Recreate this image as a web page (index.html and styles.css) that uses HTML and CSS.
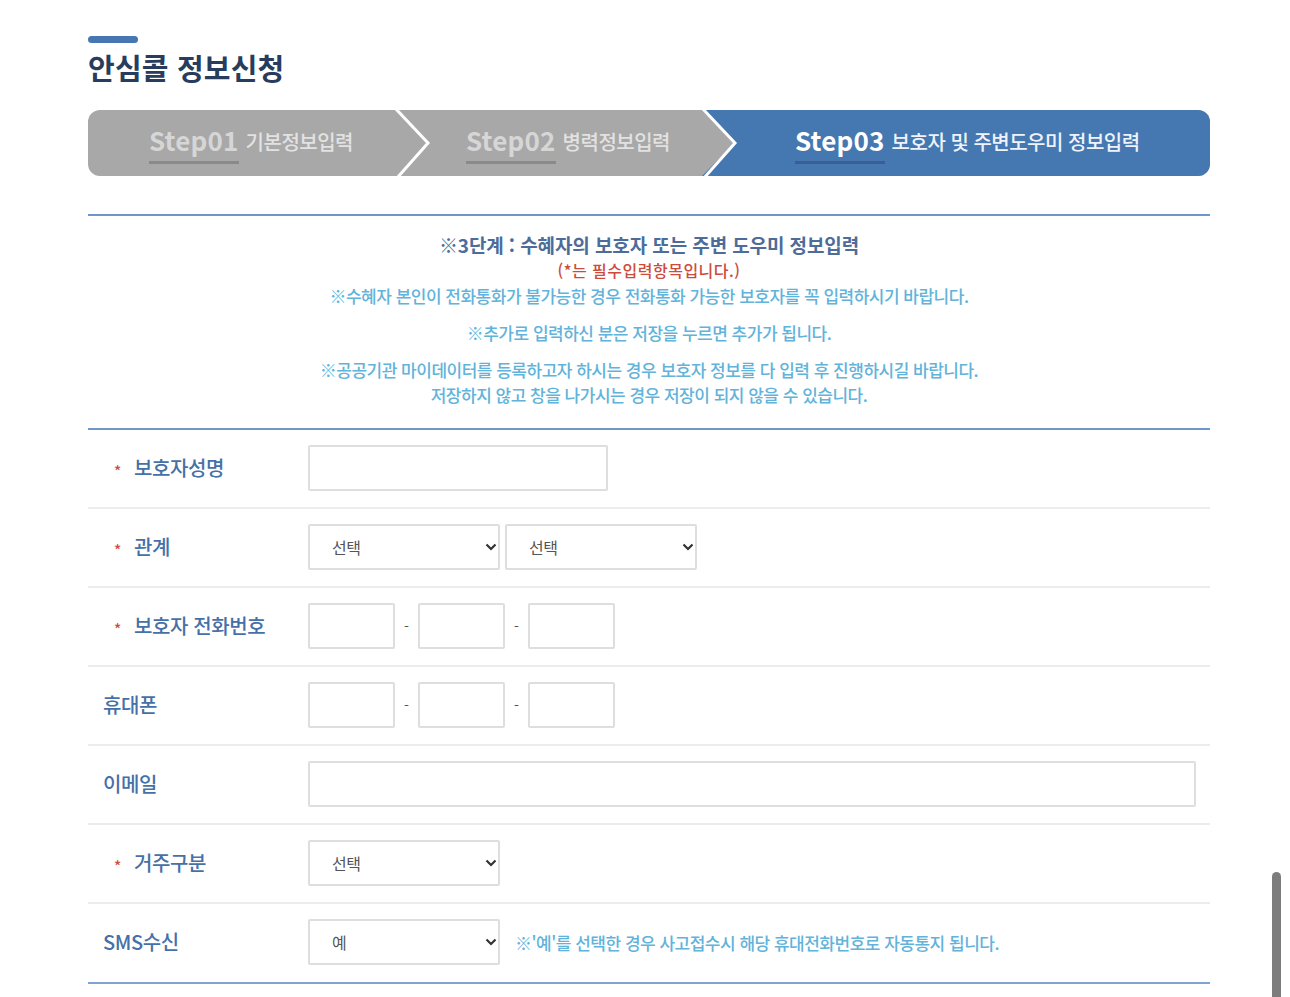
FILE: index.html
```html
<!DOCTYPE html>
<html lang="ko">
<head>
<meta charset="utf-8">
<title>안심콜 정보신청</title>
<link rel="stylesheet" href="styles.css">
</head>
<body>
<div class="page">
  <div class="title-bar"></div>
  <h2 class="title">안심콜 정보신청</h2>

  <div class="steps">
    <div class="step step1"><span class="num">Step01</span><span class="txt">기본정보입력</span></div>
    <div class="step step2"><span class="num">Step02</span><span class="txt">병력정보입력</span></div>
    <div class="step step3"><span class="num">Step03</span><span class="txt">보호자 및 주변도우미 정보입력</span></div>
    <svg class="step-arrows" viewBox="0 0 1122 66" width="1122" height="66" aria-hidden="true">
      <polyline points="307,-2 340,33 309,68" fill="none" stroke="#ffffff" stroke-width="3"/>
      <polyline points="614,-2 647,33 616,68" fill="none" stroke="#ffffff" stroke-width="3"/>
    </svg>
  </div>

  <div class="notice">
    <p class="n-title">※3단계 : 수혜자의 보호자 또는 주변 도우미 정보입력</p>
    <p class="n-req">(*는 필수입력항목입니다.)</p>
    <p class="n-info">※수혜자 본인이 전화통화가 불가능한 경우 전화통화 가능한 보호자를 꼭 입력하시기 바랍니다.</p>
    <p class="n-info gap">※추가로 입력하신 분은 저장을 누르면 추가가 됩니다.</p>
    <p class="n-info gap">※공공기관 마이데이터를 등록하고자 하시는 경우 보호자 정보를 다 입력 후 진행하시길 바랍니다.<br>저장하지 않고 창을 나가시는 경우 저장이 되지 않을 수 있습니다.</p>
  </div>

  <div class="form">
    <div class="row">
      <div class="label"><span class="star">*</span>보호자성명</div>
      <div class="field"><input class="inp w-name" type="text"></div>
    </div>
    <div class="row">
      <div class="label"><span class="star">*</span>관계</div>
      <div class="field">
        <span class="sel-wrap"><select class="sel"><option>선택</option></select><svg class="chev" viewBox="0 0 12 8" width="12" height="8"><polyline points="1.5,1.5 6,6 10.5,1.5" fill="none" stroke="#333" stroke-width="2.2"/></svg></span>
        <span class="sel-wrap"><select class="sel"><option>선택</option></select><svg class="chev" viewBox="0 0 12 8" width="12" height="8"><polyline points="1.5,1.5 6,6 10.5,1.5" fill="none" stroke="#333" stroke-width="2.2"/></svg></span>
      </div>
    </div>
    <div class="row">
      <div class="label"><span class="star">*</span>보호자 전화번호</div>
      <div class="field">
        <input class="inp w-tel" type="text"><span class="dash">-</span><input class="inp w-tel" type="text"><span class="dash">-</span><input class="inp w-tel" type="text">
      </div>
    </div>
    <div class="row">
      <div class="label plain">휴대폰</div>
      <div class="field">
        <input class="inp w-tel" type="text"><span class="dash">-</span><input class="inp w-tel" type="text"><span class="dash">-</span><input class="inp w-tel" type="text">
      </div>
    </div>
    <div class="row">
      <div class="label plain">이메일</div>
      <div class="field"><input class="inp w-mail" type="text"></div>
    </div>
    <div class="row">
      <div class="label"><span class="star">*</span>거주구분</div>
      <div class="field">
        <span class="sel-wrap"><select class="sel"><option>선택</option></select><svg class="chev" viewBox="0 0 12 8" width="12" height="8"><polyline points="1.5,1.5 6,6 10.5,1.5" fill="none" stroke="#333" stroke-width="2.2"/></svg></span>
      </div>
    </div>
    <div class="row last">
      <div class="label plain">SMS수신</div>
      <div class="field">
        <span class="sel-wrap"><select class="sel"><option>예</option><option>아니오</option></select><svg class="chev" viewBox="0 0 12 8" width="12" height="8"><polyline points="1.5,1.5 6,6 10.5,1.5" fill="none" stroke="#333" stroke-width="2.2"/></svg></span>
        <span class="sms-note">※'예'를 선택한 경우 사고접수시 해당 휴대전화번호로 자동통지 됩니다.</span>
      </div>
    </div>
  </div>
</div>
<div class="scrollbar"></div>
</body>
</html>
```

FILE: styles.css
```css
html, body {
  margin: 0;
  padding: 0;
  overflow: hidden;
  background: #ffffff;
}
body {
  font-family: "Noto Sans CJK KR", "Noto Sans", "Liberation Sans", sans-serif;
  color: #333;
}
.page {
  width: 1122px;
  margin: 36px 0 0 88px;
}
.title-bar {
  width: 50px;
  height: 7px;
  border-radius: 4px;
  background: #4677b1;
}
.title {
  margin: 5px 0 0 0;
  font-size: 29px;
  line-height: 38px;
  font-weight: 700;
  letter-spacing: 0.2px;
  color: #283c5e;
}

/* steps */
.steps {
  position: relative;
  display: flex;
  height: 66px;
  margin-top: 24px;
  border-radius: 12px;
  overflow: hidden;
  background: #a8a8a8;
}
.step {
  display: flex;
  align-items: center;
  height: 66px;
  box-sizing: border-box;
  white-space: nowrap;
  padding-bottom: 4px;
}
.step1 { width: 312px; padding-left: 61px; }
.step2 { width: 302px; padding-left: 66px; }
.step3 {
  flex: 1;
  padding-left: 93px;
  background: #4577b1;
  clip-path: polygon(0 0, 100% 0, 100% 100%, 0 100%, 33px 50%);
}
.step .num {
  display: inline-block;
  font-size: 26px;
  line-height: 30px;
  font-weight: 700;
  letter-spacing: 0.2px;
  color: #d6d6d6;
  padding-top: 6px;
  padding-bottom: 6px;
  border-bottom: 3px solid #8a8a8a;
}
.step .txt {
  margin-left: 7px;
  font-size: 20px;
  font-weight: 500;
  letter-spacing: -0.5px;
  color: #e2e2e2;
}
.step3 .num {
  color: #ffffff;
  border-bottom-color: #3a5e91;
}
.step3 .txt { color: #eef3fa; }
.step-arrows {
  position: absolute;
  left: 0;
  top: 0;
}

/* notice */
.notice {
  margin-top: 38px;
  border-top: 2px solid #6e96c7;
  border-bottom: 2px solid #6e96c7;
  padding: 15px 0 21px;
  text-align: center;
}
.notice p { margin: 0; }
.n-title {
  font-size: 19px;
  line-height: 27px;
  font-weight: 700;
  letter-spacing: -0.1px;
  color: #4d6c99;
}
.n-req {
  font-size: 16px;
  line-height: 25px;
  font-weight: 500;
  letter-spacing: 0.5px;
  color: #cc4b3c;
}
.n-info {
  font-size: 17px;
  line-height: 25px;
  font-weight: 500;
  letter-spacing: -0.5px;
  color: #62b3da;
}
.n-info.gap { margin-top: 12px; }

/* form */
.form {
  border-bottom: 2px solid #7fa4d1;
}
.row {
  display: flex;
  align-items: center;
  padding: 15px 0 16px;
  border-bottom: 2px solid #ececec;
}
.row.last { border-bottom: none; padding-bottom: 17px; }
.label {
  width: 220px;
  flex: 0 0 220px;
  box-sizing: border-box;
  padding-left: 26px;
  padding-bottom: 1px;
  display: flex;
  align-items: center;
  font-size: 20px;
  font-weight: 500;
  letter-spacing: -0.4px;
  color: #4670a8;
}
.label.plain { padding-left: 15px; }
.star {
  display: inline-block;
  width: 20px;
  font-size: 15px;
  color: #cc4b3c;
  transform: translateY(3px);
}
.field {
  display: flex;
  align-items: center;
}
.inp {
  box-sizing: border-box;
  height: 46px;
  margin: 0;
  border: 2px solid #dedede;
  border-radius: 2px;
  background: #fff;
  font-family: inherit;
  font-size: 16px;
  padding: 0 10px;
}
.w-name { width: 300px; }
.w-tel { width: 87px; }
.w-mail { width: 888px; }
.dash {
  width: 23px;
  text-align: center;
  font-size: 14px;
  color: #555;
}
.sel-wrap {
  position: relative;
  display: inline-block;
  margin-right: 5px;
}
.sel {
  appearance: none;
  -webkit-appearance: none;
  box-sizing: border-box;
  width: 192px;
  height: 46px;
  margin: 0;
  border: 2px solid #dedede;
  border-radius: 2px;
  background: #fff;
  padding: 0 0 0 22px;
  font-family: inherit;
  font-size: 16px;
  letter-spacing: -0.5px;
  color: #555;
  display: block;
}
.chev {
  position: absolute;
  right: 3px;
  top: 19px;
  pointer-events: none;
}
.sms-note {
  margin-left: 10px;
  font-size: 17px;
  font-weight: 500;
  letter-spacing: -0.5px;
  color: #62b3da;
}

.scrollbar {
  position: fixed;
  left: 1272px;
  top: 872px;
  width: 9px;
  height: 140px;
  border-radius: 5px;
  background: #7d7d7d;
}
```
